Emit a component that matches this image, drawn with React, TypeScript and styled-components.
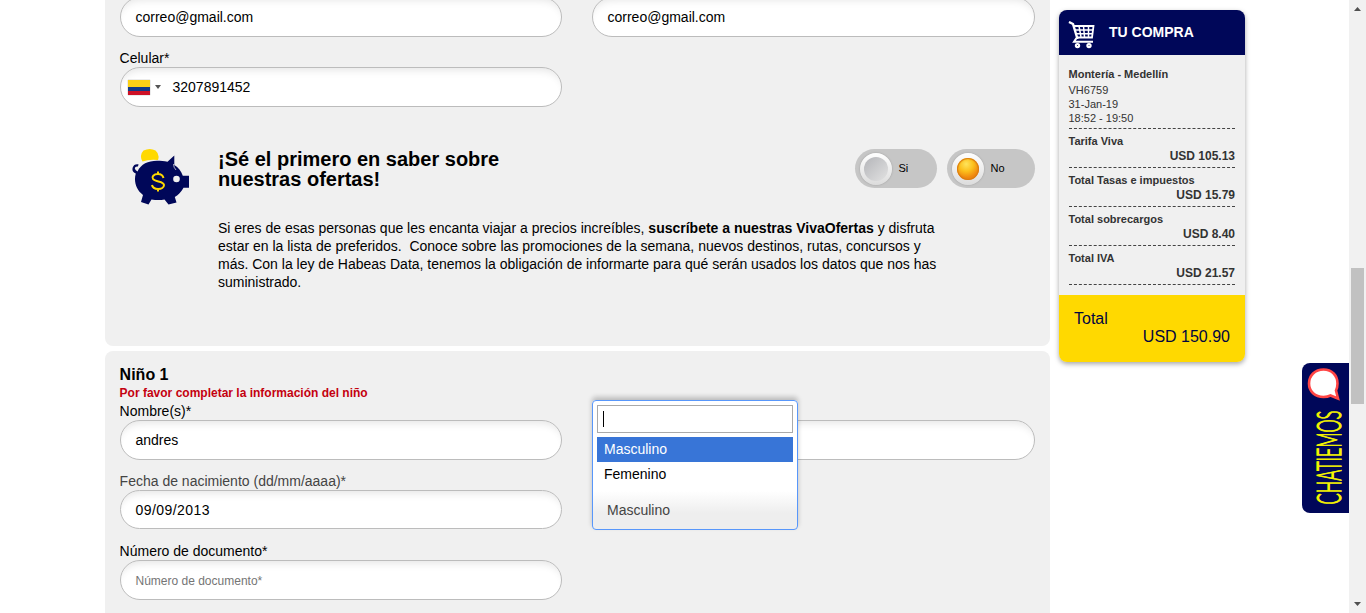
import React from "react";
import styled, { createGlobalStyle } from "styled-components";

const Global = createGlobalStyle`
  * { box-sizing: border-box; }
  html, body { margin: 0; padding: 0; background: #fff; overflow: hidden; }
  body { font-family: "Liberation Sans", Arial, sans-serif; font-size: 14px; color: #000; }
  h2, h3, p { margin: 0; }
`;

const Page = styled.div`
  position: relative;
  display: flex;
  width: 1366px;
  height: 613px;
  overflow: hidden;
  padding-left: 105px;
`;

const Form = styled.main`
  display: flex;
  flex-direction: column;
  gap: 5px;
  width: 945px;
  flex: none;
`;

const Panel = styled.section<{ $h: number; $top?: boolean }>`
  flex: none;
  height: ${(p) => p.$h}px;
  padding: 0 15px;
  background: #f0f0f0;
  border-radius: ${(p) => (p.$top ? "8px 8px 0 0" : "0 0 8px 8px")};
`;

const Row = styled.div<{ $mt?: number }>`
  display: flex;
  gap: 30px;
  margin-top: ${(p) => p.$mt ?? 0}px;
`;

const Field = styled.div<{ $w?: number }>`
  width: ${(p) => p.$w ?? 442}px;
`;

const Label = styled.div<{ $muted?: boolean }>`
  height: 18px;
  margin-left: -0.4px;
  line-height: 18px;
  white-space: nowrap;
  color: ${(p) => (p.$muted ? "#444" : "#000")};
`;

const Input = styled.div<{ $h?: number; $hint?: boolean; $ls?: number }>`
  display: flex;
  align-items: center;
  height: ${(p) => p.$h ?? 40}px;
  padding: ${(p) => (p.$hint ? 1 : 0)}px 14.5px 0;
  border: 1px solid #bcbcbc;
  border-radius: 20px;
  background: #fff;
  box-shadow: inset 0 8px 9px -6px #e4e4e4;
  font-size: ${(p) => (p.$hint ? 12 : 14)}px;
  color: ${(p) => (p.$hint ? "#757575" : "#000")};
  letter-spacing: ${(p) => p.$ls ?? 0}px;
`;

const Flag = styled.i`
  width: 22px;
  height: 15px;
  margin: 0 5px 0 -7.5px;
  background: linear-gradient(#fcd116 0 50%, #123a87 50% 75%, #ce1126 75%);
  box-shadow: 0 0 1px #888;
`;

const Caret = styled.i`
  margin-right: 11.5px;
  border: 3px solid transparent;
  border-top: 4px solid #555;
  border-bottom: 0;
`;

const Offer = styled.div`
  display: flex;
  margin-top: 41px;
`;

const PigBox = styled.div`
  width: 98px;
  flex: none;
  padding-left: 12px;
  svg { display: block; }
`;

const OfferTitle = styled.h2`
  flex: 1;
  padding-top: 1px;
  font-size: 20px;
  line-height: 20px;
`;

const Toggles = styled.div`
  display: flex;
  gap: 10px;
  padding-top: 1px;
`;

const Toggle = styled.div<{ $w: number }>`
  display: flex;
  width: ${(p) => p.$w}px;
  height: 39px;
  padding: 4px 0 0 5px;
  gap: 6.5px;
  border-radius: 20px;
  background: #c6c6c6;
  font-size: 11px;
  line-height: 31px;
`;

const Knob = styled.span`
  display: grid;
  place-items: center;
  width: 32px;
  height: 32px;
  border-radius: 50%;
  background: linear-gradient(#fff, #dcdcdc);
  box-shadow: 0 0 2px #999;
`;

const Bulb = styled.i<{ $on?: boolean }>`
  width: ${(p) => (p.$on ? 22 : 24)}px;
  height: ${(p) => (p.$on ? 22 : 24)}px;
  border-radius: 50%;
  background: ${(p) =>
    p.$on
      ? "radial-gradient(circle at 42% 28%, #ffe45c 0, #fcc01c 35%, #f08a10 65%, #ec7a0c 100%)"
      : "linear-gradient(135deg, #b4b5b9, #e2e2e2)"};
  box-shadow: ${(p) => (p.$on ? "inset 0 0 1px 1px #d97b10" : "none")};
`;

const OfferText = styled.p`
  margin: 14px 0 0 98px;
  line-height: 18px;
  white-space: pre;
`;

const Line = styled.span`
  display: block;
`;

const ChildTitle = styled.h3`
  margin-left: -0.4px;
  padding-top: 14px;
  font-size: 16px;
  line-height: 19px;
`;

const Warning = styled.p`
  height: 18px;
  margin-left: -0.4px;
  line-height: 18px;
  font-size: 12px;
  font-weight: bold;
  color: #c4000f;
`;

const SelectPopup = styled.div`
  position: absolute;
  left: 592px;
  top: 400px;
  width: 206px;
  height: 130px;
  padding: 4px;
  border: 1px solid #5897fb;
  border-radius: 4px;
  background: linear-gradient(#fff 0 90px, #eee 112px);
  box-shadow: 0 -3px 5px rgba(0, 0, 0, 0.22);
`;

const Search = styled.div`
  display: flex;
  align-items: center;
  height: 28px;
  margin-bottom: 4px;
  padding-left: 5px;
  border: 1px solid #aaa;
  i { width: 1px; height: 16px; background: #000; }
`;

const Option = styled.div<{ $active?: boolean }>`
  height: 25px;
  line-height: 25px;
  padding-left: 7px;
  color: ${(p) => (p.$active ? "#fff" : "#000")};
  background: ${(p) => (p.$active ? "#3875d7" : "transparent")};
`;

const Chosen = styled.div`
  padding: 13px 0 0 10px;
  line-height: 20px;
  color: #444;
`;

const Summary = styled.aside`
  width: 186px;
  height: 352px;
  margin: 10px 0 0 9px;
  border-radius: 8px;
  overflow: hidden;
  background: #f0f0f0;
  color: #333;
  box-shadow: 0 2px 5px rgba(0, 0, 0, 0.35);
`;

const SummaryHead = styled.header`
  display: flex;
  align-items: center;
  gap: 13px;
  height: 45px;
  padding-left: 9px;
  background: #000759;
  color: #fff;
  font-size: 14px;
  font-weight: bold;
  span { padding-bottom: 2px; }
  svg { margin-top: 4px; }
`;

const SummaryBody = styled.div`
  height: 240px;
  padding: 12px 10px 0 9.5px;
  font-size: 11px;
`;

const Flight = styled.div`
  height: 62px;
  line-height: 14px;
  border-bottom: 1px dashed #444;
  b { display: block; line-height: 15px; padding-bottom: 1px; }
`;

const Charge = styled.div`
  height: 39px;
  padding-top: 5px;
  border-bottom: 1px dashed #444;
  font-weight: bold;
  line-height: 14px;
  div { padding-top: 1px; font-size: 12px; line-height: 15px; text-align: right; }
`;

const Total = styled.footer`
  height: 67px;
  padding: 15px 15px 0;
  background: #ffd900;
  color: #000640;
  font-size: 16px;
  line-height: 18px;
  div { text-align: right; }
`;

const Chat = styled.div`
  position: absolute;
  left: 1302px;
  top: 363px;
  width: 47px;
  height: 150px;
  border-radius: 8px 0 0 8px;
  background: #000759;
  svg { display: block; overflow: visible; }
`;

const Scrollbar = styled.div`
  display: flex;
  flex-direction: column;
  align-items: center;
  width: 17px;
  height: 613px;
  margin-left: auto;
  background: #f1f1f1;
  svg { flex: none; }
`;

const Track = styled.div`
  flex: 1;
  padding-top: 251px;
`;

const Thumb = styled.div`
  width: 13px;
  height: 136px;
  background: #c1c1c1;
`;

const Pig = () => (
  <svg width="58" height="57" viewBox="0 0 58 57">
    <path d="M10.500 13.500A8.600 8.600 0 0 1 11.500 2.500Q18-.5 23.500 2.500A8.600 8.600 0 0 1 26 12Q17 11 10.500 13.500Z" fill="#ffd900" />
    <path
      d="M5.500 23.500C9 16 16 13 25 12.800c4 0 7 .2 10.500.9L42.300 7.500V17c4 2.500 7 6 8.500 10.700H57v12h-5.500c-2 4-5 7-8.700 9.300l1.700 5.500-8 2-4-5q-6 1.200-13 0l-3 5-7.500-2.500L11 47C4 42 1.500 33 3.800 25.500Q-.5 24 .7 19.500 2 15.500 6.500 16.300L6 18.500q-3-.5-3.200 1.800.2 2 2.700 3.200Z"
      fill="#000759"
    />
    <path d="M41.500 16q0 3.500 2.500 6" fill="none" stroke="#f0f0f0" strokeWidth=".7" />
    <circle cx="44.500" cy="31" r="3.300" fill="#f0f0f0" />
    <path d="M31.500 30q-1-4-5.500-4c-4.500 0-6.500 3-5 5 2 3 11 2 11 6 0 5-11 5.500-12 0M26 23.500v3M26 40.500v3" fill="none" stroke="#ffd900" strokeWidth="2" />
  </svg>
);

const Cart = () => (
  <svg width="28" height="28" viewBox="0 0 28 28" fill="none" stroke="#fff">
    <path d="M1 1l4 2 4.500 15" strokeWidth="2.400" />
    <path d="M5 5h20.500l-1.500 11.500H9" strokeWidth="1.800" />
    <path d="M6 9h19M7 12.700h18M11 5l2 11M15.500 5l1 11M20.500 5v11" strokeWidth="1.500" />
    <path d="M8.500 17L6 20.800h19" strokeWidth="2" />
    <circle cx="9.500" cy="24.600" r="1.600" strokeWidth="2.200" />
    <circle cx="21" cy="24.600" r="1.600" strokeWidth="2.200" />
  </svg>
);

const charges = [
  ["Tarifa Viva", "USD 105.13"],
  ["Total Tasas e impuestos", "USD 15.79"],
  ["Total sobrecargos", "USD 8.40"],
  ["Total IVA", "USD 21.57"],
];

export default function App() {
  return (
    <>
      <Global />
      <Page>
        <Form>
          <Panel $h={346}>
            <Row $mt={-3}>
              <Field><Input>correo@gmail.com</Input></Field>
              <Field $w={443}><Input>correo@gmail.com</Input></Field>
            </Row>
            <Row $mt={12}>
              <Field>
                <Label>Celular*</Label>
                <Input><Flag /><Caret />3207891452</Input>
              </Field>
            </Row>
            <Offer>
              <PigBox><Pig /></PigBox>
              <OfferTitle>¡Sé el primero en saber sobre<br />nuestras ofertas!</OfferTitle>
              <Toggles>
                <Toggle $w={82}><Knob><Bulb /></Knob>Si</Toggle>
                <Toggle $w={88}><Knob><Bulb $on /></Knob>No</Toggle>
              </Toggles>
            </Offer>
            <OfferText>
              <Line>Si eres de esas personas que les encanta viajar a precios increíbles, <b>suscríbete a nuestras VivaOfertas</b> y disfruta</Line>
              <Line>estar en la lista de preferidos.  Conoce sobre las promociones de la semana, nuevos destinos, rutas, concursos y</Line>
              <Line>más. Con la ley de Habeas Data, tenemos la obligación de informarte para qué serán usados los datos que nos has</Line>
              <Line>suministrado.</Line>
            </OfferText>
          </Panel>
          <Panel $h={280} $top>
            <ChildTitle>Niño 1</ChildTitle>
            <Warning>Por favor completar la información del niño</Warning>
            <Row>
              <Field>
                <Label>Nombre(s)*</Label>
                <Input>andres</Input>
              </Field>
              <Field $w={443}>
                <Label />
                <Input />
              </Field>
            </Row>
            <Row $mt={12}>
              <Field>
                <Label $muted>Fecha de nacimiento (dd/mm/aaaa)*</Label>
                <Input $h={39} $ls={0.45}>09/09/2013</Input>
              </Field>
            </Row>
            <Row $mt={13}>
              <Field>
                <Label>Número de documento*</Label>
                <Input $hint>Número de documento*</Input>
              </Field>
            </Row>
          </Panel>
        </Form>
        <Summary>
          <SummaryHead><Cart /><span>TU COMPRA</span></SummaryHead>
          <SummaryBody>
            <Flight>
              <b>Montería - Medellín</b>
              VH6759<br />31-Jan-19<br />18:52 - 19:50
            </Flight>
            {charges.map(([name, price]) => (
              <Charge key={name}>{name}<div>{price}</div></Charge>
            ))}
          </SummaryBody>
          <Total>Total<div>USD 150.90</div></Total>
        </Summary>
        <Scrollbar>
          <svg width="17" height="17"><path d="M5 11h7l-3.500-4Z" fill="#505050" /></svg>
          <Track><Thumb /></Track>
          <svg width="17" height="17"><path d="M5 6h7l-3.500 4Z" fill="#505050" /></svg>
        </Scrollbar>
        <SelectPopup>
          <Search><i /></Search>
          <Option $active>Masculino</Option>
          <Option>Femenino</Option>
          <Chosen>Masculino</Chosen>
        </SelectPopup>
        <Chat>
          <svg width="47" height="150" viewBox="0 0 47 150">
            <path d="M21.500 6.500c-8.500 0-14.500 6-14.500 14s6 13.500 14.500 13.500q4 0 7-1.500l7.500 3-2-8q1.500-3 1.500-7c0-8-5.500-14-14-14Z" fill="#fff" stroke="#ff4545" strokeWidth="2.600" />
            <text transform="translate(38.800 141.500) rotate(-90)" fontFamily="Lato, sans-serif" fontWeight="300" fontSize="33" textLength="94" lengthAdjust="spacingAndGlyphs" fill="#f5f500" stroke="#f5f500" strokeWidth="1.200" vectorEffect="non-scaling-stroke">CHATIEMOS</text>
          </svg>
        </Chat>
      </Page>
    </>
  );
}
